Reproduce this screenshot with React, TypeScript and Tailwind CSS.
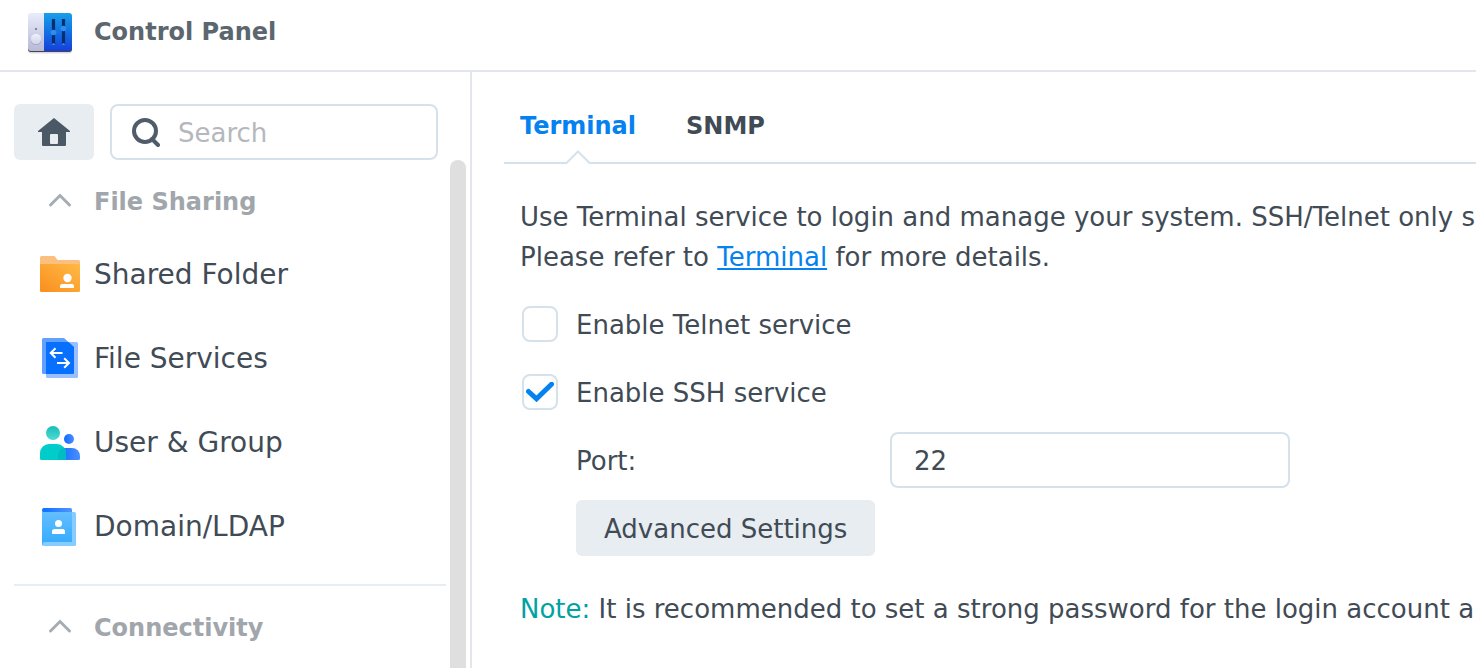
import { useState } from 'react';
import type { ReactNode } from 'react';

const ControlPanelLogo = () => (
    <svg width="44" height="46" viewBox="0 -4 44 46" aria-hidden="true">
        <defs>
            <linearGradient id="logoLight" x1="0" y1="0" x2="0" y2="1">
                <stop offset="0" stopColor="#e9ecfb" />
                <stop offset="1" stopColor="#b7b9d6" />
            </linearGradient>
            <linearGradient id="logoBlue" x1="0" y1="0" x2="0" y2="1">
                <stop offset="0" stopColor="#169fe9" />
                <stop offset="1" stopColor="#1440dc" />
            </linearGradient>
            <linearGradient id="logoKnob" x1="0" y1="0" x2="0" y2="1">
                <stop offset="0" stopColor="#f0f1fc" />
                <stop offset="1" stopColor="#d0d2e8" />
            </linearGradient>
        </defs>
        <rect y="3" width="44" height="37.5" rx="3" fill="#d9d9de" />
        <rect y="2" width="44" height="37" rx="3" fill="#44454f" />
        <path d="M3 0H16V38H3a3 3 0 0 1-3-3V3a3 3 0 0 1 3-3Z" fill="url(#logoLight)" />
        <path d="M16 0H41a3 3 0 0 1 3 3V35a3 3 0 0 1-3 3H16Z" fill="url(#logoBlue)" />
        <circle cx="8" cy="16" r="1.1" fill="#707385" />
        <circle cx="8" cy="26.8" r="5.3" fill="#9da0c0" />
        <circle cx="8" cy="26" r="5.2" fill="url(#logoKnob)" />
        <path d="M25.5 6v25M35.5 6v25" stroke="#062f72" strokeWidth="3.2" />
        <path d="M25.5 30.5v1.3M35.5 30.5v1.3" stroke="#7aa0e0" strokeWidth="2" />
        <circle cx="25.5" cy="19.5" r="2.8" fill="#2b8ff2" />
        <circle cx="35.5" cy="15.5" r="2.8" fill="#2b8ff2" />
    </svg>
);

const SharedFolderIcon = () => (
    <svg width="40" height="40" viewBox="0 0 40 40" aria-hidden="true">
        <defs>
            <linearGradient id="folder" x1="0" y1="1" x2="1" y2="0">
                <stop offset="0" stopColor="#fa8e1e" />
                <stop offset="1" stopColor="#ffba45" />
            </linearGradient>
        </defs>
        <path d="M0 3.5A1.5 1.5 0 0 1 1.5 2H14c1.8 0 2.4 4 4.5 4H38.5a1.5 1.5 0 0 1 1.5 1.5V12H0Z" fill="#fbbf80" />
        <path d="M0 10H40V36.5a1.5 1.5 0 0 1-1.5 1.5H1.5A1.5 1.5 0 0 1 0 36.5Z" fill="url(#folder)" />
        <circle cx="27.5" cy="24" r="4.2" fill="#fff" />
        <path d="M20 34v-2a2 2 0 0 1 2-2H32a2 2 0 0 1 2 2v2Z" fill="#fff" />
    </svg>
);

const FileServicesIcon = () => (
    <svg width="40" height="40" viewBox="0 0 40 40" aria-hidden="true">
        <path d="M6 4H36.5a1.5 1.5 0 0 1 1.5 1.5V38.5a1.5 1.5 0 0 1-1.5 1.5H7.5A1.5 1.5 0 0 1 6 38.5Z" fill="#99bfff" />
        <path d="M3.5 0H24L34 9V36H3.5A1.5 1.5 0 0 1 2 34.5V1.5A1.5 1.5 0 0 1 3.5 0Z" fill="#62a0ff" />
        <path d="M6 4H28.5L34 9V34.5a1.5 1.5 0 0 1-1.5 1.5H6Z" fill="#0870ff" />
        <g fill="none" stroke="#fff" strokeWidth="2">
            <path d="M22.5 15H11M15.5 10.2L10.7 15l4.8 4.8" />
            <path d="M17 25H29M24.2 20.2L29 25l-4.8 4.8" />
        </g>
    </svg>
);

const UserGroupIcon = () => (
    <svg width="40" height="40" viewBox="0 -2 40 40" aria-hidden="true">
        <defs>
            <linearGradient id="userHead" x1="0" y1="0" x2="0" y2="1">
                <stop offset="0" stopColor="#16bdb8" />
                <stop offset="1" stopColor="#4edbd4" />
            </linearGradient>
            <linearGradient id="userBlue" x1="0" y1="0" x2="1" y2="0">
                <stop offset="0" stopColor="#0d6cff" />
                <stop offset="1" stopColor="#4c8dff" />
            </linearGradient>
        </defs>
        <circle cx="29" cy="15" r="5" fill="url(#userBlue)" />
        <path d="M18 36V31a7 7 0 0 1 7-7h7a8 8 0 0 1 8 8v2.5a1.5 1.5 0 0 1-1.5 1.5Z" fill="url(#userBlue)" />
        <circle cx="13" cy="9" r="7" fill="url(#userHead)" />
        <path d="M0 34.5V29a9 9 0 0 1 9-9h8a9 9 0 0 1 9 9v7H1.5A1.5 1.5 0 0 1 0 34.5Z" fill="#00cdca" />
        <path d="M18 36V31a7 7 0 0 1 7-7a9 9 0 0 1 1 5v7Z" fill="#02bcc4" />
    </svg>
);

const DomainIcon = () => (
    <svg width="40" height="40" viewBox="0 -2 40 40" aria-hidden="true">
        <defs>
            <linearGradient id="bookTop" x1="0" y1="0" x2="1" y2="0">
                <stop offset="0" stopColor="#0870ff" />
                <stop offset="1" stopColor="#5593ff" />
            </linearGradient>
            <linearGradient id="bookBody" x1="0" y1="0" x2="0" y2="1">
                <stop offset="0" stopColor="#66bfff" />
                <stop offset="1" stopColor="#33aaff" />
            </linearGradient>
        </defs>
        <path d="M4 4H34.5a1.5 1.5 0 0 1 1.5 1.5V36.5a1.5 1.5 0 0 1-1.5 1.5H4a2 2 0 0 1-2-2Z" fill="#85ccff" />
        <path d="M4 0H30.5a1.5 1.5 0 0 1 1.5 1.5V6H2V2a2 2 0 0 1 2-2Z" fill="url(#bookTop)" />
        <path d="M2 2a2 2 0 0 0 2 2H32V34H4.5A2.5 2.5 0 0 0 3 37.5A2 2 0 0 1 2 36Z" fill="url(#bookBody)" />
        <circle cx="18.5" cy="15.5" r="3.5" fill="#fff" />
        <path d="M12 26v-2.5a2.5 2.5 0 0 1 2.5-2.5h8a2.5 2.5 0 0 1 2.5 2.5V26Z" fill="#fff" />
    </svg>
);

const HomeIcon = () => (
    <svg width="32" height="28" viewBox="0 0 32 28" aria-hidden="true">
        <path
            fillRule="evenodd"
            d="M16 0L32 13V14H28V27a1 1 0 0 1-1 1H5a1 1 0 0 1-1-1V14H0V13ZM13 16a1 1 0 0 0-1 1v8a1 1 0 0 0 1 1h6a1 1 0 0 0 1-1v-8a1 1 0 0 0-1-1Z"
            fill="#4b5866"
        />
    </svg>
);

const SearchIcon = () => (
    <svg
        width="28"
        height="30"
        viewBox="0 -1 28 30"
        className="shrink-0"
        aria-hidden="true"
    >
        <g fill="none" stroke="#505c69" strokeWidth="4">
            <circle cx="13" cy="13" r="11" />
            <path d="M20 21L26 27" strokeLinecap="round" />
        </g>
    </svg>
);

const items: { label: string; icon: ReactNode }[] = [
    { label: 'Shared Folder', icon: <SharedFolderIcon /> },
    { label: 'File Services', icon: <FileServicesIcon /> },
    { label: 'User & Group', icon: <UserGroupIcon /> },
    { label: 'Domain/LDAP', icon: <DomainIcon /> },
];

const GroupHeader = ({ title }: { title: string }) => (
    <button
        type="button"
        className="flex h-[72px] w-full items-center gap-[22px] pt-2.5 pl-[34px] text-left text-2xl font-bold text-[#a0a6ab]"
    >
        <svg width="24" height="16" viewBox="0 0 24 16" aria-hidden="true">
            <path
                d="M2.5 12L12 2.5L21.5 12"
                fill="none"
                stroke="#a5adb3"
                strokeWidth="3"
                strokeLinecap="round"
            />
        </svg>
        <span className="pt-0.5">{title}</span>
    </button>
);

const Sidebar = () => (
    <aside className="flex w-[472px] shrink-0 flex-col border-r-2 border-[#e3e7eb]">
        <div className="flex gap-4 pt-8 pr-8 pl-3.5">
            <button
                type="button"
                aria-label="Home"
                className="flex h-14 w-20 items-center justify-center rounded-md bg-[#e8edf2]"
            >
                <HomeIcon />
            </button>
            <label className="flex h-14 min-w-0 flex-1 items-center gap-[18px] rounded-lg border-2 border-[#d5e1eb] px-5">
                <SearchIcon />
                <input
                    type="search"
                    aria-label="Search"
                    placeholder="Search"
                    className="w-full min-w-0 bg-transparent pt-0.5 outline-none placeholder:text-[#b4b8bd]"
                />
            </label>
        </div>
        <div className="flex min-h-0 flex-1 gap-1 pr-1 pl-3.5">
            <nav className="flex-1 overflow-hidden">
                <GroupHeader title="File Sharing" />
                <ul className="border-b-2 border-[#e8edf1] pb-4">
                    {items.map((item) => (
                        <li key={item.label}>
                            <a
                                href="#"
                                className="flex h-[84px] items-center gap-3.5 pl-[26px] text-[28px]"
                            >
                                {item.icon}
                                <span className="pt-0.5">{item.label}</span>
                            </a>
                        </li>
                    ))}
                </ul>
                <GroupHeader title="Connectivity" />
            </nav>
            <div className="w-4 rounded-t-full bg-[#dfdfdf]" />
        </div>
    </aside>
);

type CheckRowProps = {
    label: string;
    checked: boolean;
    onChange: (checked: boolean) => void;
};

const CheckRow = ({ label, checked, onChange }: CheckRowProps) => (
    <label className="flex h-[68px] items-center gap-[18px] pl-0.5">
        <span className="grid h-9 w-9 place-items-center">
            <input
                type="checkbox"
                checked={checked}
                onChange={(e) => onChange(e.target.checked)}
                className="col-start-1 row-start-1 h-9 w-9 appearance-none rounded-lg border-2 border-[#d5e1eb] bg-white"
            />
            {checked && (
                <svg
                    width="28"
                    height="20"
                    viewBox="0 0 28 20"
                    className="pointer-events-none col-start-1 row-start-1"
                    aria-hidden="true"
                >
                    <path
                        d="M2.5 9.5L10.5 16.8L25.5 2.2"
                        fill="none"
                        stroke="#0582ef"
                        strokeWidth="5"
                        strokeLinecap="round"
                    />
                </svg>
            )}
        </span>
        <span className="pt-0.5">{label}</span>
    </label>
);

const App = () => {
    const [telnet, setTelnet] = useState(false);
    const [ssh, setSsh] = useState(true);
    const [port, setPort] = useState('22');

    return (
        <div className="flex h-screen flex-col overflow-hidden bg-white font-['DejaVu_Sans',sans-serif] text-[26px] text-[#414b55]">
            <header className="flex h-[72px] shrink-0 items-center gap-[22px] border-b-2 border-[#e3e7eb] pb-1.5 pl-7">
                <ControlPanelLogo />
                <h1 className="text-2xl font-bold text-[#5c666e]">
                    Control Panel
                </h1>
            </header>
            <div className="flex min-h-0 flex-1">
                <Sidebar />
                <main className="min-w-0 flex-1 overflow-hidden pl-8 whitespace-nowrap">
                    <div
                        role="tablist"
                        className="flex h-[92px] gap-[50px] border-b-2 border-[#d5e1eb] px-4 text-2xl font-bold"
                    >
                        <button
                            type="button"
                            role="tab"
                            aria-selected="true"
                            className="relative pt-[18px] text-[#0582ef]"
                        >
                            Terminal
                            <svg
                                width="26"
                                height="14"
                                viewBox="0 0 26 14"
                                className="absolute -bottom-0.5 left-1/2 -translate-x-1/2"
                                aria-hidden="true"
                            >
                                <path d="M1 14V12L13 1L25 12V14Z" fill="#fff" />
                                <path
                                    d="M0 13H1.5L13 1.5L24.5 13H26"
                                    fill="none"
                                    stroke="#d5e1eb"
                                    strokeWidth="2"
                                />
                            </svg>
                        </button>
                        <button
                            type="button"
                            role="tab"
                            aria-selected="false"
                            className="pt-[18px]"
                        >
                            SNMP
                        </button>
                    </div>
                    <div className="px-4 pt-[33px]">
                        <p className="leading-10">
                            Use Terminal service to login and manage your
                            system. SSH/Telnet only s
                            <br />
                            Please refer to{' '}
                            <a href="#" className="text-[#0582ef] underline">
                                Terminal
                            </a>{' '}
                            for more details.
                        </p>
                        <div className="pt-[13px]">
                            <CheckRow
                                label="Enable Telnet service"
                                checked={telnet}
                                onChange={setTelnet}
                            />
                            <CheckRow
                                label="Enable SSH service"
                                checked={ssh}
                                onChange={setSsh}
                            />
                            <div className="flex h-[68px] items-center pl-14">
                                <label
                                    htmlFor="port"
                                    className="w-[314px] pt-0.5"
                                >
                                    Port:
                                </label>
                                <input
                                    id="port"
                                    type="text"
                                    value={port}
                                    onChange={(e) => setPort(e.target.value)}
                                    className="h-14 w-[400px] rounded-lg border-2 border-[#d5e1eb] px-[22px] pt-0.5 outline-none"
                                />
                            </div>
                            <div className="flex h-[68px] items-center pl-14">
                                <button
                                    type="button"
                                    className="h-14 rounded-md bg-[#e8edf2] px-7 pt-0.5"
                                >
                                    Advanced Settings
                                </button>
                            </div>
                        </div>
                        <p className="pt-[27px] leading-10">
                            <span className="text-[#00a2a2]">Note:</span> It is
                            recommended to set a strong password for the login
                            account a
                        </p>
                    </div>
                </main>
            </div>
        </div>
    );
};

export default App;
